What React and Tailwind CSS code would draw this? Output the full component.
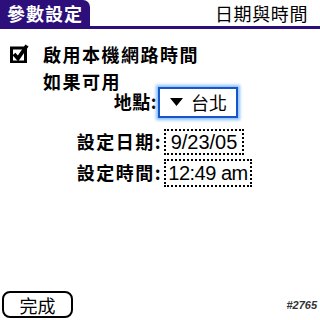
import React from "react";

const cjk = { fontFamily: '"Noto Sans CJK TC", "Noto Sans", sans-serif' };
const latin = { fontFamily: '"Liberation Sans", Arial, sans-serif' };

function CheckBox() {
  return (
    <svg width="21" height="19" viewBox="0 0 21 19" className="block">
      <rect x="1.5" y="4" width="14" height="14" fill="none" stroke="#000" strokeWidth="3" />
      <path d="M4 10 L8 14.5 L17 1.5" fill="none" stroke="#000" strokeWidth="3.8" />
    </svg>
  );
}

export default function App() {
  return (
    <div className="w-[320px] h-[320px] bg-white flex flex-col overflow-hidden" style={cjk}>
      {/* Title bar */}
      <div className="flex items-end h-[29px] border-b-[3px] border-[#2c0f7a]">
        <div className="w-[90px] h-[26px] bg-[#2c0f7a] rounded-tr-[7px] flex items-center pl-[7px]">
          <span className="text-white font-bold text-[18px] leading-none tracking-[1px]">參數設定</span>
        </div>
        <div className="flex-1 flex justify-end items-center h-[26px] pr-[12px]">
          <span className="text-black text-[18px] leading-none tracking-[0.6px]">日期與時間</span>
        </div>
      </div>

      {/* Body */}
      <div className="flex flex-col pt-[15px]">
        <div className="flex items-center h-[19px] pl-[10px] gap-[12px]">
          <CheckBox />
          <span className="font-bold text-[18px] leading-none tracking-[1.5px]">啟用本機網路時間</span>
        </div>
        <div className="h-[19px] mt-[8px] pl-[43px] flex items-center">
          <span className="font-bold text-[18px] leading-none tracking-[1.5px]">如果可用</span>
        </div>

        <div className="flex items-center -mt-[4px] h-[32px]">
          <div className="w-[158px] text-right pr-[1px]">
            <span className="font-bold text-[18px] leading-none tracking-[0.5px]">地點:</span>
          </div>
          <div className="w-[80px] h-[31px] border-2 border-[#1557c9] shadow-[0_0_3px_2px_#86bdff] flex items-center pl-[10px] gap-[8px]">
            <svg width="13" height="8" viewBox="0 0 13 8" className="block">
              <path d="M0 0 L13 0 L6.5 8 Z" fill="#000" />
            </svg>
            <span className="text-[18px] leading-none">台北</span>
          </div>
        </div>

        <div className="flex items-center mt-[11px] h-[26px]">
          <div className="w-[164px] text-right pr-[2px]">
            <span className="font-bold text-[18px] leading-none tracking-[1.5px]">設定日期:</span>
          </div>
          <div className="w-[80px] h-[26px] border-2 border-dotted border-black flex items-center justify-center" style={latin}>
            <span className="text-[20px] leading-none">9/23/05</span>
          </div>
        </div>

        <div className="flex items-center mt-[4px] h-[28px]">
          <div className="w-[164px] text-right pr-[2px]">
            <span className="font-bold text-[18px] leading-none tracking-[1.5px]">設定時間:</span>
          </div>
          <div className="w-[88px] h-[28px] border-2 border-dotted border-black flex items-center justify-center" style={latin}>
            <span className="text-[20px] leading-none tracking-[-0.5px]">12:49 am</span>
          </div>
        </div>
      </div>

      {/* Bottom */}
      <div className="mt-auto flex items-end justify-between pl-[2px] pr-[3px] pb-[2px]">
        <button className="w-[71px] h-[27px] border-2 border-black rounded-[8px] flex items-center justify-center">
          <span className="text-[18px] leading-none">完成</span>
        </button>
        <span className="text-[11px] font-bold italic text-[#333] leading-none mb-[7px]" style={latin}>#2765</span>
      </div>
    </div>
  );
}
